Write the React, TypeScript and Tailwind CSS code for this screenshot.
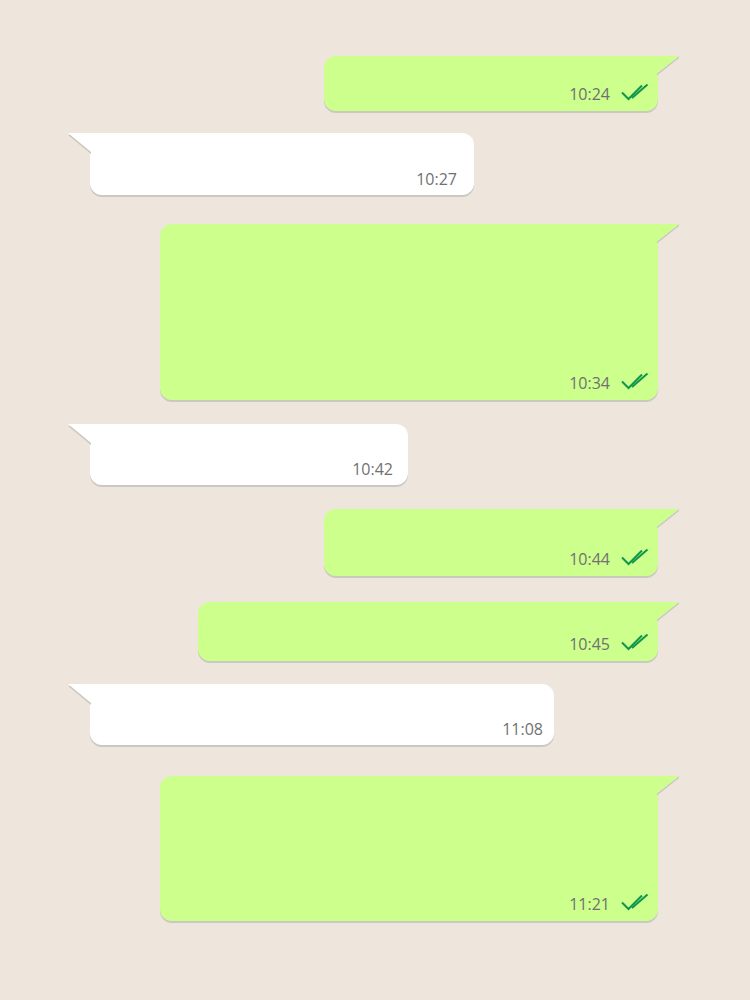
type Msg = { out: boolean; w: number; h: number; mt: number; time: string; pr: number };

const messages: Msg[] = [
  { out: true, w: 334, h: 55, mt: 56, time: "10:24", pr: 9 },
  { out: false, w: 384, h: 62, mt: 22, time: "10:27", pr: 17 },
  { out: true, w: 498, h: 176, mt: 29, time: "10:34", pr: 9 },
  { out: false, w: 318, h: 61, mt: 24, time: "10:42", pr: 15 },
  { out: true, w: 334, h: 67, mt: 24, time: "10:44", pr: 9 },
  { out: true, w: 460, h: 59, mt: 26, time: "10:45", pr: 9 },
  { out: false, w: 464, h: 61, mt: 23, time: "11:08", pr: 11 },
  { out: true, w: 498, h: 145, mt: 31, time: "11:21", pr: 9 },
];

const Ticks = () => (
  <svg width="28" height="17" viewBox="0 0 28 17" fill="none" stroke="#10964a" strokeWidth="2">
    <path d="M1 8.5 L7.5 15 L21 1.5" />
    <path d="M11 14 L26.5 0.5" />
  </svg>
);

const Bubble = ({ m }: { m: Msg }) => (
  <div className={m.out ? "flex justify-end" : "flex justify-start"} style={{ marginTop: m.mt }}>
    <div
      className={
        m.out
          ? "relative flex items-end justify-end bg-[#ccff8c] rounded-[12px] rounded-tr-none shadow-[0_2px_0_#c9c9c1] pb-[9px]"
          : "relative flex items-end justify-end bg-white rounded-[12px] rounded-tl-none shadow-[0_2px_0_#c9c9c1] pb-[8px]"
      }
      style={{ width: m.w, height: m.h, paddingRight: m.pr }}
    >
      {m.out ? (
        <svg className="absolute top-0 -right-[22px]" width="23" height="20" viewBox="0 0 23 20">
          <path d="M22 0 L0 17.5 L0 19.5 L22 2 Z" fill="#c9c9c1" />
          <path d="M0 0 L22 0 L0 17.5 Z" fill="#ccff8c" />
        </svg>
      ) : (
        <svg className="absolute top-0 -left-[22px]" width="23" height="22" viewBox="0 0 23 22">
          <path d="M0 0 L23 0 L23 19 Z" fill="#c9c9c1" transform="translate(0 2)" />
          <path d="M0 0 L23 0 L23 19 Z" fill="#ffffff" />
        </svg>
      )}
      <span className="text-[16px] leading-none text-[#717171] font-['Open_Sans',sans-serif]">{m.time}</span>
      {m.out && (
        <span className="ml-[11px] mb-[1px]">
          <Ticks />
        </span>
      )}
    </div>
  </div>
);

export default function App() {
  return (
    <div className="w-[750px] h-[1000px] bg-[#eee5dc] pl-[90px] pr-[92px] overflow-hidden">
      <div className="h-px" />
      <div className="-mt-px">
        {messages.map((m, i) => (
          <Bubble key={i} m={m} />
        ))}
      </div>
    </div>
  );
}
